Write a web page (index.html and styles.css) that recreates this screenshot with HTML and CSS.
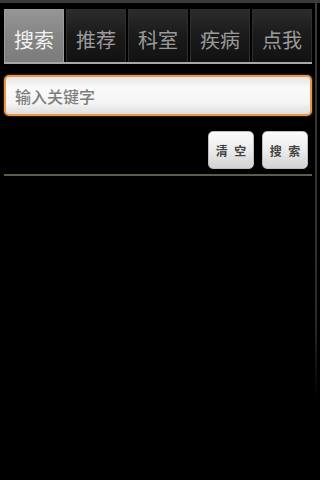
FILE: index.html
```html
<!DOCTYPE html>
<html lang="zh-CN">
<head>
  <meta charset="UTF-8" />
  <meta name="viewport" content="width=device-width, initial-scale=1.0"/>
  <title>搜索</title>
  <link rel="stylesheet" href="styles.css">
</head>
<body>
  <div class="status-strip"></div>
  <div class="screen">
    <div class="tabs">
      <div class="tab active">搜索</div>
      <div class="tab">推荐</div>
      <div class="tab">科室</div>
      <div class="tab">疾病</div>
      <div class="tab">点我</div>
    </div>
    <div class="tab-line"></div>

    <input class="keyword" type="text" placeholder="输入关键字" />

    <div class="actions">
      <button class="btn">清&nbsp;空</button>
      <button class="btn">搜&nbsp;索</button>
    </div>
    <div class="divider"></div>
  </div>
  <div class="scrollbar"></div>
</body>
</html>
```

FILE: styles.css
```css
* {
  margin: 0;
  padding: 0;
  box-sizing: border-box;
}

html, body {
  height: 100%;
  background: #000;
  font-family: "Noto Sans CJK SC", "Noto Sans", sans-serif;
  overflow: hidden;
}

body {
  position: relative;
}

.status-strip {
  height: 3px;
  background: #3a3a3a;
}

.screen {
  padding: 6px 8px 0 4px;
}

.tabs {
  display: flex;
  gap: 2px;
  height: 53px;
}

.tab {
  flex: 1;
  display: flex;
  align-items: center;
  justify-content: center;
  padding-top: 6px;
  font-size: 20px;
  color: #9a9a9a;
  background: linear-gradient(to bottom, #2c2c2c, #1a1a1a 50%, #121212);
  border: 1px solid #2e2e2e;
  border-bottom: none;
}

.tab.active {
  color: #f2f2f2;
  background: linear-gradient(to bottom, #959595, #858585 50%, #7c7c7c);
  border-color: #9c9c9c;
}

.tab-line {
  height: 2px;
  background: #a8a8a8;
}

.keyword {
  display: block;
  width: 100%;
  height: 41px;
  margin-top: 11px;
  padding: 0 9px;
  border: 2px solid #e89550;
  border-radius: 5px;
  background: linear-gradient(to bottom, #e6e6e6, #fafafa 30%, #f4f4f4 70%, #dedede);
  box-shadow: 0 0 2px #a65f22;
  font-family: inherit;
  font-size: 16px;
  font-weight: 500;
  color: #333;
  outline: none;
}

.keyword::placeholder {
  color: #7e7e7e;
}

.actions {
  display: flex;
  justify-content: flex-end;
  gap: 8px;
  margin-top: 15px;
  padding-right: 4px;
}

.btn {
  width: 46px;
  height: 38px;
  border: 1px solid #bdbdbd;
  border-radius: 5px;
  background: linear-gradient(to bottom, #fbfbfb, #ececec 50%, #d2d2d2);
  font-family: inherit;
  font-size: 12px;
  font-weight: bold;
  letter-spacing: 2px;
  text-indent: 2px;
  color: #444;
}

.divider {
  height: 2px;
  margin-top: 5px;
  background: #5c5c4c;
}

.scrollbar {
  position: absolute;
  top: 0;
  right: 3px;
  width: 2px;
  height: 400px;
  background: linear-gradient(to bottom, #3c3c3c, #2a2a2a 80%, #000);
}
```
